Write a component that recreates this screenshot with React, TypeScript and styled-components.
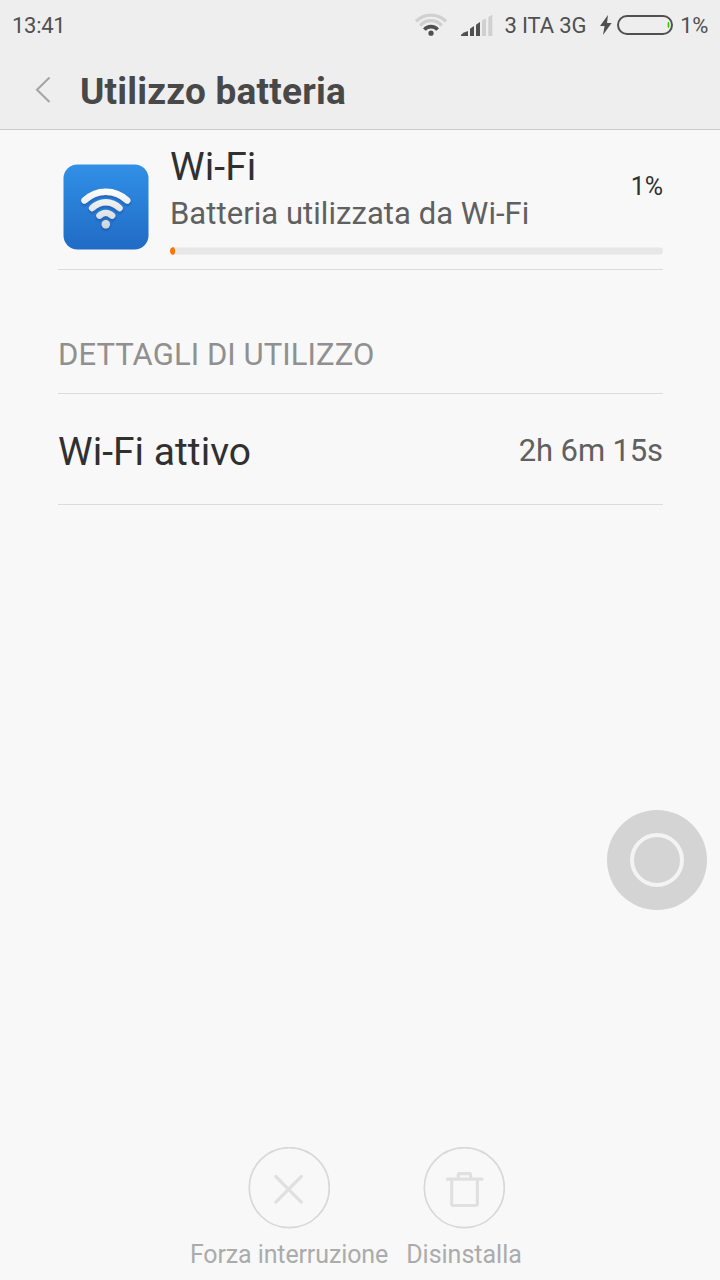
import React from "react";
import styled, { createGlobalStyle } from "styled-components";

const GlobalStyle = createGlobalStyle`
  * { box-sizing: border-box; }
  body { margin: 0; background: #f8f8f8; font-family: Roboto, "Noto Sans", sans-serif; }
  svg { display: block; flex: none; }
`;

const Screen = styled.div`
  position: relative;
  display: flex;
  flex-direction: column;
  width: 720px;
  height: 1280px;
  overflow: hidden;
  background: #f8f8f8;
`;

const TopArea = styled.header`
  height: 130px;
  background: #eeeeee;
  border-bottom: 1px solid #cbcbcb;
`;

const StatusBar = styled.div`
  display: flex;
  align-items: center;
  height: 51px;
  padding: 0 12px;
  color: #505050;
  white-space: nowrap;
`;

const StatusText = styled.span<{ $gap?: number; $spacing?: number }>`
  font-size: 22px;
  line-height: 51px;
  margin-left: ${(p) => p.$gap ?? 0}px;
  letter-spacing: ${(p) => p.$spacing ?? 0}px;
`;

const IconSlot = styled.span<{ $gap?: number }>`
  margin: -1px 0 0 ${(p) => p.$gap ?? 0}px;
`;

const StatusIcons = styled.div`
  display: flex;
  align-items: center;
  margin-left: auto;
`;

const TitleBar = styled.div`
  display: flex;
  align-items: center;
  height: 78px;
  padding-left: 34px;
`;

const Title = styled.h1`
  margin: 3px 0 0 28px;
  font-size: 37px;
  line-height: 44px;
  font-weight: 700;
  letter-spacing: 0.2px;
  color: #484848;
  white-space: nowrap;
`;

const Content = styled.main`
  flex: 1;
  padding: 0 57px 0 58px;
`;

const Summary = styled.section`
  display: flex;
  height: 140px;
  padding: 13px 0 0 4px;
  border-bottom: 1px solid #dcdcdc;
`;

const AppIcon = styled.div`
  width: 88px;
  margin: 20px 20px 0 0;
`;

const SummaryBody = styled.div`
  flex: 1;
`;

const SummaryRow = styled.div`
  display: flex;
  justify-content: space-between;
`;

const AppName = styled.div`
  font-size: 39px;
  line-height: 48px;
  letter-spacing: 0.1px;
  color: #303030;
`;

const Description = styled.div`
  margin-top: 3px;
  font-size: 31px;
  line-height: 40px;
  letter-spacing: 0.05px;
  color: #606060;
  white-space: nowrap;
`;

const Percent = styled.div`
  margin-top: 24px;
  font-size: 25px;
  line-height: 40px;
  color: #303030;
`;

const Track = styled.div`
  height: 8px;
  margin-top: 13px;
  border-radius: 4px;
  background: linear-gradient(#efefef 1px, #e7e7e7 1px 7px, #efefef 7px);
  overflow: hidden;
`;

const Fill = styled.div`
  width: 1%;
  height: 8px;
  border-radius: 50%;
  background: #ff7200;
`;

const SectionTitle = styled.h2`
  margin: 0;
  height: 124px;
  padding-top: 65px;
  font-size: 31px;
  line-height: 40px;
  font-weight: 400;
  letter-spacing: 0.07px;
  color: #909090;
  border-bottom: 1px solid #dcdcdc;
`;

const DetailRow = styled.div`
  display: flex;
  justify-content: space-between;
  align-items: center;
  height: 111px;
  padding-top: 4px;
  border-bottom: 1px solid #dcdcdc;
`;

const DetailLabel = styled.span`
  margin-top: 2px;
  font-size: 39px;
  line-height: 48px;
  letter-spacing: 0.04px;
  color: #303030;
`;

const DetailValue = styled.span`
  font-size: 31px;
  line-height: 44px;
  letter-spacing: -0.13px;
  color: #606060;
`;

const Actions = styled.footer`
  display: flex;
  height: 133px;
  padding-left: 190px;
  gap: 18px;
`;

const Action = styled.div<{ $width: number; $spacing?: number }>`
  display: flex;
  flex-direction: column;
  align-items: center;
  width: ${(p) => p.$width}px;
  font-size: 25px;
  line-height: 30px;
  letter-spacing: ${(p) => p.$spacing ?? 0}px;
  color: #ababab;
  white-space: nowrap;
`;

const ActionLabel = styled.span`
  margin-top: 11px;
`;

const AssistBall = styled.div`
  position: absolute;
  left: 607px;
  top: 810px;
  display: flex;
  align-items: center;
  justify-content: center;
  width: 100px;
  height: 100px;
  border-radius: 50%;
  background: #d4d4d4;
`;

const AssistRing = styled.div`
  width: 54px;
  height: 54px;
  border: 4px solid #f3f3f3;
  border-radius: 50%;
`;

const WifiStatus = () => (
  <svg width="34" height="26" viewBox="0 0 34 26" fill="none">
    <path d="M2 9.4A21 21 0 0 1 32 9.4" stroke="#d0d0d0" strokeWidth="3.3" />
    <path d="M6.2 13.6A14.4 14.4 0 0 1 27.8 13.6" stroke="#d0d0d0" strokeWidth="3.3" />
    <path d="M10.4 17.7A8.6 8.6 0 0 1 23.6 17.7" stroke="#505050" strokeWidth="3.6" />
    <circle cx="17" cy="21.2" r="2.6" fill="#505050" />
  </svg>
);

const SignalStatus = () => (
  <svg width="32" height="22" viewBox="0 0 32 22">
    <path d="M0 22V20.8Q2.5 18 7 17V22Z" fill="#505050" />
    <path d="M9 15.2Q9 14.4 10 14L13 12V22H9Z" fill="#505050" />
    <path d="M15 11.4Q15 10.4 16 10L19 8V22H15Z" fill="#505050" />
    <path d="M21 7.2Q21 6.4 22 5.8L25 4.5V22H21Z" fill="#d0d0d0" />
    <path d="M27.3 3.8Q27.3 2.8 28 2.4L31.3 0.8V22H27.3Z" fill="#d0d0d0" />
  </svg>
);

const Charging = () => (
  <svg width="12" height="20" viewBox="0 0 12 20">
    <path d="M8 0L0 11H4.6L3 20L11.6 8H7Z" fill="#505050" />
  </svg>
);

const Battery = () => (
  <svg width="56" height="20" viewBox="0 0 56 20">
    <rect x="1" y="1" width="54" height="18" rx="9" fill="none" stroke="#505050" strokeWidth="2" />
    <ellipse cx="51.5" cy="10" rx="0.9" ry="3.2" fill="#38c000" />
  </svg>
);

const WifiApp = () => (
  <svg width="88" height="88" viewBox="0 0 88 88">
    <defs>
      <linearGradient id="tile" x1="0" y1="0" x2="0" y2="1">
        <stop offset="0" stopColor="#3190e6" />
        <stop offset="1" stopColor="#206bc5" />
      </linearGradient>
      <linearGradient id="silver" gradientUnits="userSpaceOnUse" x1="0" y1="25" x2="0" y2="66">
        <stop offset="0" stopColor="#ffffff" />
        <stop offset="1" stopColor="#cfd3da" />
      </linearGradient>
      <filter id="drop" x="-20%" y="-20%" width="140%" height="150%">
        <feDropShadow dx="0" dy="2" stdDeviation="1" floodColor="#0a3f8c" floodOpacity="0.5" />
      </filter>
    </defs>
    <rect x="1.5" y="1.5" width="85" height="85" rx="14" fill="url(#tile)" />
    <g filter="url(#drop)" fill="none" stroke="url(#silver)" strokeWidth="6.5" strokeLinecap="round">
      <path d="M22.5 37.4C34.5 25.8 53 25.8 65.2 37.4" />
      <path d="M30.2 45C38.2 37.2 49.5 37.2 57.5 45" />
      <path d="M37.5 52.6C41.2 49 46.4 49 50.1 52.6" />
      <circle cx="43.8" cy="61.2" r="4.2" fill="url(#silver)" stroke="none" />
    </g>
  </svg>
);

const StopIcon = () => (
  <svg width="82" height="82" viewBox="0 0 82 82" fill="none">
    <circle cx="41.3" cy="40.7" r="40" stroke="#d8d8d8" strokeWidth="1.7" />
    <path d="M27.8 29.5L53.3 55.2M53.3 29.5L27.8 55.2" stroke="#e0e0e0" strokeWidth="3.2" strokeLinecap="round" />
  </svg>
);

const TrashIcon = () => (
  <svg width="82" height="82" viewBox="0 0 82 82" fill="none" stroke="#e0e0e0" strokeWidth="3.2">
    <circle cx="41.3" cy="40.7" r="40" stroke="#d8d8d8" strokeWidth="1.7" />
    <path d="M24.5 32.2H59" strokeLinecap="round" />
    <path d="M35.3 32V28Q35.3 26.6 36.5 26.6H46.3Q47.6 26.6 47.6 28V32" />
    <path d="M28.7 33V56.7Q28.7 58.5 30.7 58.5H52.4Q54.4 58.5 54.4 56.5V33" />
  </svg>
);

const BackIcon = () => (
  <svg width="18" height="26" viewBox="0 0 18 26">
    <path d="M15.5 0.5L3 12.7L15.5 24.9" fill="none" stroke="#a5a5a5" strokeWidth="2.1" />
  </svg>
);

export default function App() {
  return (
    <Screen>
      <GlobalStyle />
      <TopArea>
        <StatusBar>
          <StatusText $spacing={-0.3}>13:41</StatusText>
          <StatusIcons>
            <IconSlot><WifiStatus /></IconSlot>
            <IconSlot $gap={13}><SignalStatus /></IconSlot>
            <StatusText $gap={12} $spacing={-0.15}>3 ITA 3G</StatusText>
            <IconSlot $gap={14}><Charging /></IconSlot>
            <IconSlot $gap={5}><Battery /></IconSlot>
            <StatusText $gap={7} $spacing={-0.4}>1%</StatusText>
          </StatusIcons>
        </StatusBar>
        <TitleBar>
          <BackIcon />
          <Title>Utilizzo batteria</Title>
        </TitleBar>
      </TopArea>
      <Content>
        <Summary>
          <AppIcon><WifiApp /></AppIcon>
          <SummaryBody>
            <SummaryRow>
              <div>
                <AppName>Wi-Fi</AppName>
                <Description>Batteria utilizzata da Wi-Fi</Description>
              </div>
              <Percent>1%</Percent>
            </SummaryRow>
            <Track><Fill /></Track>
          </SummaryBody>
        </Summary>
        <SectionTitle>DETTAGLI DI UTILIZZO</SectionTitle>
        <DetailRow>
          <DetailLabel>Wi-Fi attivo</DetailLabel>
          <DetailValue>2h 6m 15s</DetailValue>
        </DetailRow>
      </Content>
      <Actions>
        <Action $width={198} $spacing={-0.12}>
          <StopIcon />
          <ActionLabel>Forza interruzione</ActionLabel>
        </Action>
        <Action $width={116}>
          <TrashIcon />
          <ActionLabel>Disinstalla</ActionLabel>
        </Action>
      </Actions>
      <AssistBall><AssistRing /></AssistBall>
    </Screen>
  );
}
